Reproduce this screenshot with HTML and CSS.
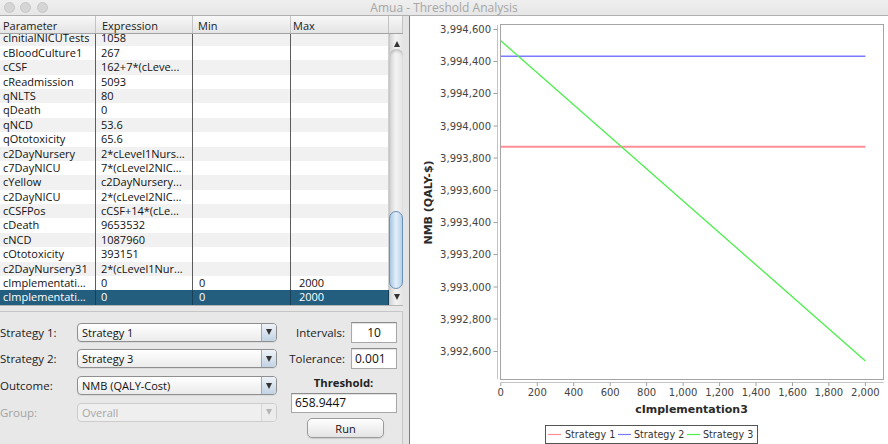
FILE: index.html
```html
<!DOCTYPE html>
<html>
<head>
<meta charset="utf-8">
<title>Amua - Threshold Analysis</title>
<link rel="stylesheet" href="styles.css">
</head>
<body>
<div class="window">
  <div class="titlebar">
    <div class="lights"><span></span><span></span><span></span></div>
    <div class="title">Amua - Threshold Analysis</div>
    <div></div>
  </div>
  <div class="main">
    <div class="left">
      <div class="table">
        <div class="thead">
          <div class="th c1">Parameter</div>
          <div class="th c2">Expression</div>
          <div class="th c3">Min</div>
          <div class="th c4">Max</div>
          <div class="th corner"></div>
        </div>
        <div class="tbody">
          <div class="rows">
            <div class="rows-inner">
              <div class="tr"><div class="td c1">cInitialNICUTests</div><div class="td c2">1058</div><div class="td c3"></div><div class="td c4"></div></div>
              <div class="tr"><div class="td c1">cBloodCulture1</div><div class="td c2">267</div><div class="td c3"></div><div class="td c4"></div></div>
              <div class="tr"><div class="td c1">cCSF</div><div class="td c2">162+7*(cLeve...</div><div class="td c3"></div><div class="td c4"></div></div>
              <div class="tr"><div class="td c1">cReadmission</div><div class="td c2">5093</div><div class="td c3"></div><div class="td c4"></div></div>
              <div class="tr"><div class="td c1">qNLTS</div><div class="td c2">80</div><div class="td c3"></div><div class="td c4"></div></div>
              <div class="tr"><div class="td c1">qDeath</div><div class="td c2">0</div><div class="td c3"></div><div class="td c4"></div></div>
              <div class="tr"><div class="td c1">qNCD</div><div class="td c2">53.6</div><div class="td c3"></div><div class="td c4"></div></div>
              <div class="tr"><div class="td c1">qOtotoxicity</div><div class="td c2">65.6</div><div class="td c3"></div><div class="td c4"></div></div>
              <div class="tr"><div class="td c1">c2DayNursery</div><div class="td c2">2*cLevel1Nurs...</div><div class="td c3"></div><div class="td c4"></div></div>
              <div class="tr"><div class="td c1">c7DayNICU</div><div class="td c2">7*(cLevel2NIC...</div><div class="td c3"></div><div class="td c4"></div></div>
              <div class="tr"><div class="td c1">cYellow</div><div class="td c2">c2DayNursery...</div><div class="td c3"></div><div class="td c4"></div></div>
              <div class="tr"><div class="td c1">c2DayNICU</div><div class="td c2">2*(cLevel2NIC...</div><div class="td c3"></div><div class="td c4"></div></div>
              <div class="tr"><div class="td c1">cCSFPos</div><div class="td c2">cCSF+14*(cLe...</div><div class="td c3"></div><div class="td c4"></div></div>
              <div class="tr"><div class="td c1">cDeath</div><div class="td c2">9653532</div><div class="td c3"></div><div class="td c4"></div></div>
              <div class="tr"><div class="td c1">cNCD</div><div class="td c2">1087960</div><div class="td c3"></div><div class="td c4"></div></div>
              <div class="tr"><div class="td c1">cOtotoxicity</div><div class="td c2">393151</div><div class="td c3"></div><div class="td c4"></div></div>
              <div class="tr"><div class="td c1">c2DayNursery31</div><div class="td c2">2*(cLevel1Nur...</div><div class="td c3"></div><div class="td c4"></div></div>
              <div class="tr"><div class="td c1">cImplementati...</div><div class="td c2">0</div><div class="td c3">0</div><div class="td c4">2000</div></div>
              <div class="tr sel"><div class="td c1">cImplementati...</div><div class="td c2">0</div><div class="td c3">0</div><div class="td c4">2000</div></div>
            </div>
          </div>
          <div class="vscroll">
            <div class="sb-up"><i class="tri-up"></i></div>
            <div class="sb-track"><div class="sb-thumb"></div></div>
            <div class="sb-down"><i class="tri-down"></i></div>
          </div>
        </div>
      </div>
      <div class="controls">
        <div class="ctl-left">
          <span class="lbl">Strategy 1:</span>
          <div class="combo"><span class="combo-text">Strategy 1</span><span class="combo-btn"><i class="tri-down"></i></span></div>
          <span class="lbl">Strategy 2:</span>
          <div class="combo"><span class="combo-text">Strategy 3</span><span class="combo-btn"><i class="tri-down"></i></span></div>
          <span class="lbl">Outcome:</span>
          <div class="combo"><span class="combo-text">NMB (QALY-Cost)</span><span class="combo-btn"><i class="tri-down"></i></span></div>
          <span class="lbl disabled">Group:</span>
          <div class="combo disabled"><span class="combo-text">Overall</span><span class="combo-btn"><i class="tri-down"></i></span></div>
        </div>
        <div class="ctl-right">
          <div class="field-row"><span class="lbl">Intervals:</span><span class="field center">10</span></div>
          <div class="field-row second"><span class="lbl">Tolerance:</span><span class="field">0.001</span></div>
          <div class="thr-label">Threshold:</div>
          <div class="field wide">658.9447</div>
          <button class="btn">Run</button>
        </div>
      </div>
    </div>
    <div class="splitter"></div>
    <div class="chart">
      <svg class="plot" width="478" height="428" viewBox="410 16 478 428">
        <rect class="plot-bg" x="500.5" y="24.5" width="383" height="355"/>
        <line class="axis" x1="497.5" y1="25" x2="497.5" y2="379"/>
        <line class="axis" x1="501" y1="382.5" x2="883.5" y2="382.5"/>
        <g class="ticks">
          <line x1="493.5" y1="29.5" x2="497.5" y2="29.5"/>
          <line x1="493.5" y1="61.5" x2="497.5" y2="61.5"/>
          <line x1="493.5" y1="93.5" x2="497.5" y2="93.5"/>
          <line x1="493.5" y1="126" x2="497.5" y2="126"/>
          <line x1="493.5" y1="158" x2="497.5" y2="158"/>
          <line x1="493.5" y1="190.5" x2="497.5" y2="190.5"/>
          <line x1="493.5" y1="222.5" x2="497.5" y2="222.5"/>
          <line x1="493.5" y1="254.5" x2="497.5" y2="254.5"/>
          <line x1="493.5" y1="287" x2="497.5" y2="287"/>
          <line x1="493.5" y1="319" x2="497.5" y2="319"/>
          <line x1="493.5" y1="351.5" x2="497.5" y2="351.5"/>
          <line x1="500.8" y1="382.5" x2="500.8" y2="386"/>
          <line x1="537.3" y1="382.5" x2="537.3" y2="386"/>
          <line x1="573.7" y1="382.5" x2="573.7" y2="386"/>
          <line x1="610.2" y1="382.5" x2="610.2" y2="386"/>
          <line x1="646.6" y1="382.5" x2="646.6" y2="386"/>
          <line x1="683.1" y1="382.5" x2="683.1" y2="386"/>
          <line x1="719.6" y1="382.5" x2="719.6" y2="386"/>
          <line x1="756" y1="382.5" x2="756" y2="386"/>
          <line x1="792.5" y1="382.5" x2="792.5" y2="386"/>
          <line x1="828.9" y1="382.5" x2="828.9" y2="386"/>
          <line x1="865.4" y1="382.5" x2="865.4" y2="386"/>
        </g>
        <g class="ylabels">
          <text x="491" y="32.9">3,994,600</text>
          <text x="491" y="65.1">3,994,400</text>
          <text x="491" y="97.3">3,994,200</text>
          <text x="491" y="129.5">3,994,000</text>
          <text x="491" y="161.7">3,993,800</text>
          <text x="491" y="193.9">3,993,600</text>
          <text x="491" y="226.1">3,993,400</text>
          <text x="491" y="258.3">3,993,200</text>
          <text x="491" y="290.5">3,993,000</text>
          <text x="491" y="322.7">3,992,800</text>
          <text x="491" y="354.9">3,992,600</text>
        </g>
        <g class="xlabels">
          <text x="500.8" y="396.3">0</text>
          <text x="537.3" y="396.3">200</text>
          <text x="573.7" y="396.3">400</text>
          <text x="610.2" y="396.3">600</text>
          <text x="646.6" y="396.3">800</text>
          <text x="683.1" y="396.3">1,000</text>
          <text x="719.6" y="396.3">1,200</text>
          <text x="756" y="396.3">1,400</text>
          <text x="792.5" y="396.3">1,600</text>
          <text x="828.9" y="396.3">1,800</text>
          <text x="865.4" y="396.3">2,000</text>
        </g>
        <line class="s1" x1="500.8" y1="146.7" x2="865.4" y2="146.7"/>
        <line class="s2" x1="500.8" y1="56.3" x2="865.4" y2="56.3"/>
        <line class="s3" x1="500.8" y1="40.8" x2="865.4" y2="361"/>
        <text class="axis-title" x="691.5" y="413">cImplementation3</text>
        <text class="axis-title" transform="translate(432,202.5) rotate(-90)">NMB (QALY-$)</text>
        <rect class="legend-box" x="545.5" y="425.5" width="212" height="18"/>
        <line class="s1 lg" x1="548" y1="434.5" x2="561" y2="434.5"/>
        <text class="legend" x="565" y="438">Strategy 1</text>
        <line class="s2 lg" x1="618" y1="434.5" x2="631" y2="434.5"/>
        <text class="legend" x="634" y="438">Strategy 2</text>
        <line class="s3 lg" x1="687" y1="434.5" x2="700" y2="434.5"/>
        <text class="legend" x="703" y="438">Strategy 3</text>
      </svg>
    </div>
  </div>
</div>
</body>
</html>
```

FILE: styles.css
```css
* { box-sizing: border-box; margin: 0; padding: 0; }
html, body { width: 888px; height: 444px; overflow: hidden; }
body {
  font-family: "Open Sans", "Liberation Sans", sans-serif;
  font-size: 11px;
  color: #111;
  background: #e8e8e8;
}
.window { width: 888px; height: 444px; display: flex; flex-direction: column; }

/* title bar */
.titlebar {
  height: 16px; flex: none;
  display: grid; grid-template-columns: 1fr auto 1fr; align-items: center;
  background: linear-gradient(#efefef, #e6e6e6);
  border-bottom: 1px solid #b0b0b0;
}
.lights { display: flex; gap: 5.5px; padding-left: 3.5px; }
.lights span {
  width: 11px; height: 11px; border-radius: 50%;
  background: #d5d5d5; border: 1px solid #c7c7c7;
}
.title { font-size: 12px; line-height: 15px; color: #a6a6a6; white-space: nowrap; }

.main { flex: 1; display: flex; min-height: 0; }
.left { width: 403px; flex: none; display: flex; flex-direction: column; background: #e8e8e8; }

/* table */
.table {
  height: 290px; flex: none; display: flex; flex-direction: column;
  background: #fff; border-bottom: 1px solid #b5b5b5;
}
.thead {
  height: 18px; flex: none;
  display: grid; grid-template-columns: 96px 97px 98px 98px 14px;
  background: linear-gradient(#f8f8f8, #e4e4e4);
  border-bottom: 1px solid #a3a3a3;
}
.th {
  border-right: 1px solid #c3c3c3;
  padding-top: 2px; line-height: 15px;
  white-space: nowrap; overflow: hidden; color: #1a1a1a;
}
.th.c1 { padding-left: 3px; }
.th.c2 { padding-left: 6px; }
.th.c3 { padding-left: 5px; }
.th.c4 { padding-left: 2px; }
.th.corner { border-right: 1px solid #c3c3c3; }

.tbody { flex: 1; display: flex; min-height: 0; }
.rows { width: 389px; flex: none; overflow: hidden; }
.rows-inner { margin-top: -2.6px; }
.tr {
  display: grid; grid-template-columns: 96px 97px 98px 98px;
  height: 14.4px; line-height: 14.4px;
}
.tr:nth-child(odd) { background: #f1f1f1; }
.td {
  border-right: 1px solid #5c5c5c;
  white-space: nowrap; overflow: hidden;
}
.td.c1 { padding-left: 3px; }
.td.c2 { padding-left: 5px; }
.td.c3 { padding-left: 6px; }
.td.c4 { padding-left: 8px; border-right-color: #cfcfcf; }
.tr.sel { background: #245e7f; color: #fff; }
.tr.sel .td { border-right-color: #173f57; }

/* scrollbar */
.vscroll {
  width: 14px; flex: none; display: flex; flex-direction: column;
  background: linear-gradient(to right, #d6d6d6, #f3f3f3 45%, #e4e4e4);
  border-left: 1px solid #c8c8c8;
}
.sb-up { height: 15px; flex: none; display: flex; justify-content: center; padding-top: 7px; }
.sb-track {
  flex: 1; display: flex; flex-direction: column; justify-content: flex-end;
  border-top-left-radius: 6px; border-top-right-radius: 6px;
  box-shadow: inset 0 3px 3px -1px rgba(0,0,0,.2);
}
.sb-thumb {
  height: 78px; border-radius: 7px; margin: 0 0 0 -1px;
  background: linear-gradient(to right, #a6c5e2, #e4f0fa 50%, #b4d0ea);
  border: 1px solid #6a91b6;
}
.sb-down { height: 16px; flex: none; display: flex; justify-content: center; align-items: center; }
.tri-up {
  width: 0; height: 0;
  border-left: 3.5px solid transparent; border-right: 3.5px solid transparent;
  border-bottom: 6px solid #333;
}
.tri-down {
  width: 0; height: 0;
  border-left: 3.5px solid transparent; border-right: 3.5px solid transparent;
  border-top: 6px solid #333;
}

/* controls */
.controls {
  flex: 1; margin-top: 5px;
  border-top: 1px solid #c6c6c6; border-right: 1px solid #c6c6c6;
  display: flex; align-items: flex-start;
  background: #e8e8e8;
}
.ctl-left {
  width: 277px; flex: none; margin-top: 10.7px;
  display: grid; grid-template-columns: 77px 200px;
  grid-auto-rows: 19px; row-gap: 7.67px; align-items: center;
}
.lbl { font-size: 11.5px; color: #222; white-space: nowrap; }
.lbl.disabled { color: #a3a3a3; }
.combo {
  height: 19px; display: flex; align-items: stretch;
  border: 1px solid #8f8f8f; border-radius: 4px;
  background: linear-gradient(#ffffff, #ebebeb);
  box-shadow: 0 1px 0 rgba(0,0,0,.06);
}
.combo-text { flex: 1; padding-left: 4px; line-height: 17px; font-size: 11px; color: #111; white-space: nowrap; }
.combo-btn {
  width: 15px; flex: none; display: flex; align-items: center; justify-content: center;
  border-left: 1px solid #a7a7a7; border-radius: 0 3px 3px 0;
  background: linear-gradient(#eef3f8, #c2d3e5);
}
.combo.disabled { border-color: #cdcdcd; background: #efefef; box-shadow: none; }
.combo.disabled .combo-text { color: #a7a7a7; }
.combo.disabled .combo-btn { background: #ececec; border-left-color: #d6d6d6; }
.combo.disabled .tri-down { border-top-color: #b5b5b5; }

.ctl-right {
  width: 109px; flex: none; margin-left: 11px; padding-top: 9.7px;
  display: flex; flex-direction: column;
}
.field-row { height: 21px; display: flex; align-items: center; justify-content: flex-end; gap: 6px; }
.field-row.second { margin-top: 5.6px; }
.field {
  width: 46px; height: 21px;
  background: #fff; border: 1px solid #a8a8a8; border-top-color: #8c8c8c;
  box-shadow: inset 0 1px 1px rgba(0,0,0,.12);
  font-size: 12px; line-height: 19px; padding-left: 3px; color: #111; white-space: nowrap;
}
.field.center { text-align: center; padding-left: 0; }
.thr-label {
  margin-top: 6.4px; height: 14px; line-height: 14px;
  text-align: center; padding-left: 2px;
  font-weight: bold; font-size: 11.3px; color: #222;
}
.field.wide { width: 106px; height: 20px; line-height: 18px; margin-top: 3px; margin-left: 3px; }
.btn {
  width: 77px; height: 20px; margin-top: 5.6px; margin-left: 19px;
  border: 1px solid #9b9b9b; border-radius: 5px;
  background: linear-gradient(#ffffff, #e4e4e4);
  box-shadow: 0 1px 1px rgba(0,0,0,.12);
  font-family: "Open Sans", "Liberation Sans", sans-serif; font-size: 11px; color: #111;
}

/* splitter and chart */
.splitter { width: 7px; flex: none; background: #e4e4e4; border-right: 1px solid #7c7c7c; }
.chart { flex: 1; background: #fff; }
.plot { display: block; }
.plot text { font-family: "DejaVu Sans", "Liberation Sans", sans-serif; font-size: 10px; fill: #444; }
.plot-bg { fill: #fff; stroke: #a5a5a5; }
.axis { stroke: #c4c4c4; stroke-width: 1; }
.ticks line { stroke: #a0a0a0; stroke-width: 1; }
.ylabels text { text-anchor: end; }
.xlabels text { text-anchor: middle; }
.s1 { stroke: #ff8f97; stroke-width: 2; }
.s2 { stroke: #7b7bff; stroke-width: 1.6; }
.s3 { stroke: #4cef4c; stroke-width: 1.3; }
.lg { stroke-width: 1.2; }
.plot .axis-title { font-weight: bold; font-size: 11px; fill: #2a2a2a; text-anchor: middle; }
.legend-box { fill: #fff; stroke: #555; }
.plot .legend { font-size: 9.6px; fill: #333; }
```
